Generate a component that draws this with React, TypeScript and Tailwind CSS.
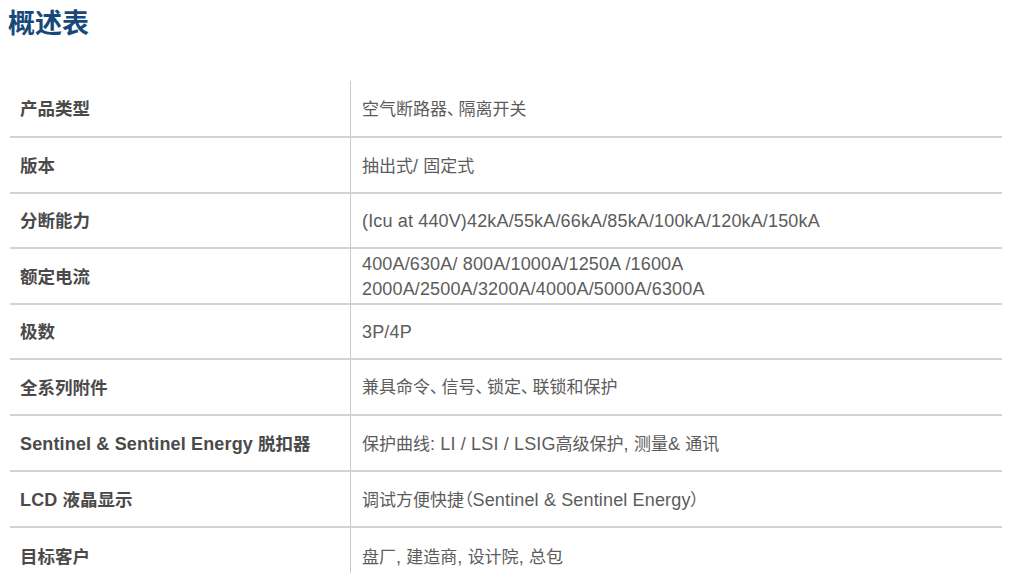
import React from "react";

const rows = [
  { label: "产品类型", value: ["空气断路器、隔离开关"], h: "h-[57px]" },
  { label: "版本", value: ["抽出式/ 固定式"], h: "h-[56px]" },
  { label: "分断能力", value: ["(Icu at 440V)42kA/55kA/66kA/85kA/100kA/120kA/150kA"], h: "h-[55px]" },
  {
    label: "额定电流",
    value: ["400A/630A/ 800A/1000A/1250A /1600A", "2000A/2500A/3200A/4000A/5000A/6300A"],
    h: "h-[56px]",
  },
  { label: "极数", value: ["3P/4P"], h: "h-[55px]" },
  { label: "全系列附件", value: ["兼具命令、信号、锁定、联锁和保护"], h: "h-[56px]" },
  { label: "Sentinel & Sentinel Energy 脱扣器", value: ["保护曲线: LI / LSI / LSIG高级保护, 测量& 通讯"], h: "h-[56px]" },
  { label: "LCD 液晶显示", value: ["调试方便快捷（Sentinel & Sentinel Energy）"], h: "h-[56px]" },
  { label: "目标客户", value: ["盘厂, 建造商, 设计院, 总包"], h: "h-[56px]" },
];

// latin runs a bit larger than the CJK, CJK punctuation set proportional
function Rich({ text }: { text: string }) {
  const parts = text.split(/([\u0000-\u007f]+|、)/).filter(Boolean);
  return (
    <>
      {parts.map((p, i) => {
        if (p === "、")
          return (
            <span key={i} className="[font-feature-settings:'palt'] mr-[3px]">
              、
            </span>
          );
        if (/^[\u0000-\u007f]+$/.test(p))
          return (
            <span key={i} className="text-[18px] tracking-[0.15px]">
              {p}
            </span>
          );
        return (
          <span key={i} className="[font-feature-settings:'palt']">
            {p}
          </span>
        );
      })}
    </>
  );
}

export default function App() {
  return (
    <div
      className="w-[1024px] h-[573px] overflow-hidden bg-white"
      style={{ fontFamily: '"Liberation Sans", "Noto Sans CJK SC", sans-serif' }}
    >
      {/* Title */}
      <div className="pl-[8px] pt-[8px] h-[81px]">
        <h1 className="text-[27px] leading-[32px] font-bold text-[#17487a]">概述表</h1>
      </div>

      {/* Overview table */}
      <div className="ml-[10px] w-[992px]">
        {rows.map((r, i) => (
          <div
            key={i}
            className={`flex ${r.h} ${i < rows.length - 1 ? "border-b-2 border-[#d3d3d3]" : ""}`}
          >
            <div className="w-[341px] shrink-0 flex items-center pl-[10px] pt-[2px] border-r border-[#c9c9c9] text-[17.5px] font-bold text-[#4a4a4a]">
              <div>
                <Rich text={r.label} />
              </div>
            </div>
            <div className="flex-1 flex flex-col justify-center pl-[11px] pt-[2px] text-[17px] leading-[24px] text-[#5c5c5c]">
              {r.value.map((v, j) => (
                <div key={j}>
                  <Rich text={v} />
                </div>
              ))}
            </div>
          </div>
        ))}
      </div>
    </div>
  );
}
